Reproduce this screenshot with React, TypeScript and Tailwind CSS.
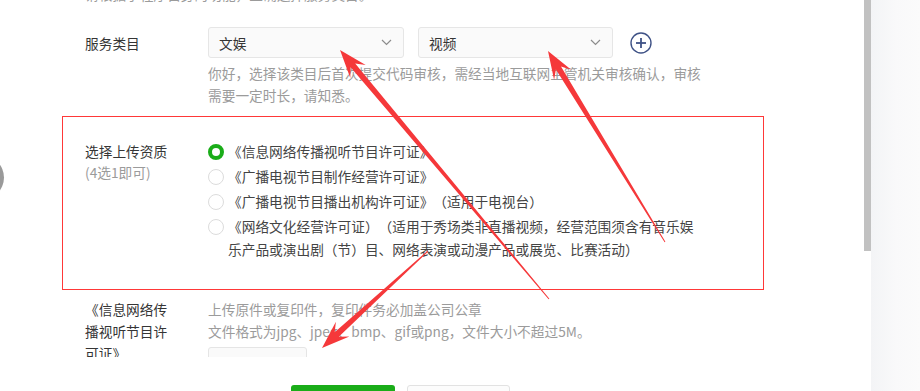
import React from "react";

type Pt = [number, number];

function arrowPoints(tip: Pt, tail: Pt): string {
  const dx = tail[0] - tip[0];
  const dy = tail[1] - tip[1];
  const len = Math.hypot(dx, dy);
  const ux = dx / len;
  const uy = dy / len;
  const nx = -uy;
  const ny = ux;
  const L = 28;
  const W = 10;
  const N = 20;
  const w1 = 3;
  const w2 = 0.5;
  const p = (a: number, b: number) =>
    `${(tip[0] + ux * a + nx * b).toFixed(1)},${(tip[1] + uy * a + ny * b).toFixed(1)}`;
  return [p(0, 0), p(L, W), p(N, w1), p(len, w2), p(len, -w2), p(N, -w1), p(L, -W)].join(" ");
}

function Chevron() {
  return (
    <svg width="11" height="7" viewBox="0 0 11 7" className="shrink-0">
      <polyline points="1,1 5.5,5.5 10,1" fill="none" stroke="#8c8c8c" strokeWidth="1.2" />
    </svg>
  );
}

function Select({ value, className }: { value: string; className: string }) {
  return (
    <div
      className={`flex h-[31px] shrink-0 items-center justify-between rounded-[3px] border border-[#e6e6e6] bg-[#fafafa] pl-[10px] pr-[11px] ${className}`}
    >
      <span className="leading-[20px] text-[#353535]">{value}</span>
      <Chevron />
    </div>
  );
}

function Radio({ checked, children }: { checked?: boolean; children: React.ReactNode }) {
  return (
    <div className="flex items-start gap-[4px]">
      {checked ? (
        <div className="mt-[4px] h-[16px] w-[16px] shrink-0 rounded-full border-[4px] border-[#1aad19] bg-white" />
      ) : (
        <div className="mt-[4px] h-[16px] w-[16px] shrink-0 rounded-full border border-[#dcdcdc] bg-white" />
      )}
      <div className="w-[472px] leading-[23px] text-[#444444]">{children}</div>
    </div>
  );
}

export default function App() {
  const arrows: [Pt, Pt][] = [
    [[340, 50], [549, 299]],
    [[548, 51], [665, 242]],
    [[322, 348], [428, 251]],
  ];
  return (
    <div className="relative flex h-[391px] w-[920px] overflow-hidden bg-white font-['Noto_Sans_CJK_SC','Liberation_Sans',sans-serif] text-[13.7px] text-[#353535] [text-spacing-trim:space-all]">
      <div className="flex w-[871px] shrink-0 bg-white">
        <div className="flex w-[864px] shrink-0 flex-col">
          <div className="h-[357px] shrink-0 overflow-hidden">
            <p className="ml-[85px] mt-[-17px] leading-[22px] text-[#9b9b9b]">
              请根据小程序自身的功能，正确选择服务类目。
            </p>

            <div className="mt-[22px] flex items-center">
              <div className="ml-[85px] w-[123px] shrink-0 leading-[22px]">服务类目</div>
              <Select value="文娱" className="w-[196px]" />
              <Select value="视频" className="ml-[14px] w-[195px]" />
              <svg width="22" height="22" viewBox="0 0 22 22" className="ml-[17px] shrink-0">
                <circle cx="11" cy="11" r="10" fill="none" stroke="#3f5286" strokeWidth="1.4" />
                <line x1="11" y1="6" x2="11" y2="16" stroke="#3f5286" strokeWidth="1.8" />
                <line x1="6" y1="11" x2="16" y2="11" stroke="#3f5286" strokeWidth="1.8" />
              </svg>
            </div>

            <div className="ml-[208px] mt-[4px] w-[500px] leading-[22px] text-[#9b9b9b]">
              你好，选择该类目后首次提交代码审核，需经当地互联网主管机关审核确认，审核需要一定时长，请知悉。
            </div>

            <div className="ml-[62px] mt-[10px] flex w-[702px] items-start border border-[#ff3838] pb-[28px] pl-[22px] pt-[23px]">
              <div className="w-[123px] shrink-0 pt-[1px] leading-[21px]">
                <div>选择上传资质</div>
                <div className="text-[#9b9b9b]">(4选1即可)</div>
              </div>
              <div className="flex flex-col gap-[2px]">
                <Radio checked>《信息网络传播视听节目许可证》</Radio>
                <Radio>《广播电视节目制作经营许可证》</Radio>
                <Radio>《广播电视节目播出机构许可证》（适用于电视台）</Radio>
                <Radio>
                  《网络文化经营许可证）（适用于秀场类非直播视频，经营范围须含有音乐娱乐产品或演出剧（节）目、网络表演或动漫产品或展览、比赛活动）
                </Radio>
              </div>
            </div>

            <div className="mt-[8px] flex items-start">
              <div className="ml-[85px] w-[123px] shrink-0 pr-[37px] leading-[22px]">
                《信息网络传播视听节目许可证》
              </div>
              <div>
                <p className="leading-[22px] text-[#9b9b9b]">上传原件或复印件，复印件务必加盖公司公章</p>
                <p className="leading-[22px] text-[#9b9b9b]">
                  文件格式为jpg、jpeg、bmp、gif或png，文件大小不超过5M。
                </p>
                <div className="mt-[5px] h-[100px] w-[99px] rounded-[3px] border border-[#e5e5e5] bg-[#fafafa]" />
              </div>
            </div>
          </div>

          <div className="flex gap-[12px] pl-[291px] pt-[28px]">
            <div className="flex h-[36px] w-[104px] items-center justify-center rounded-[3px] bg-[#1aad19] text-white">
              提交
            </div>
            <div className="flex h-[36px] w-[103px] items-center justify-center rounded-[3px] border border-[#e2e2e2] bg-[#fcfcfc]">
              取消
            </div>
          </div>
        </div>
        <div className="w-[7px] shrink-0">
          <div className="h-[251px] w-full bg-[#c1c1c1]" />
        </div>
      </div>
      <div className="flex-1 bg-gradient-to-r from-[#f3f4f6] via-[#f9f9fa] to-[#fbfbfb]" />

      <div className="absolute left-[-41px] top-[155px] h-[45px] w-[45px] rounded-full bg-[#9a9a9a]" />

      <svg className="pointer-events-none absolute left-0 top-0" width="920" height="391" viewBox="0 0 920 391">
        {arrows.map(([tip, tail], i) => (
          <polygon key={i} points={arrowPoints(tip, tail)} fill="#f5383a" />
        ))}
      </svg>
    </div>
  );
}
